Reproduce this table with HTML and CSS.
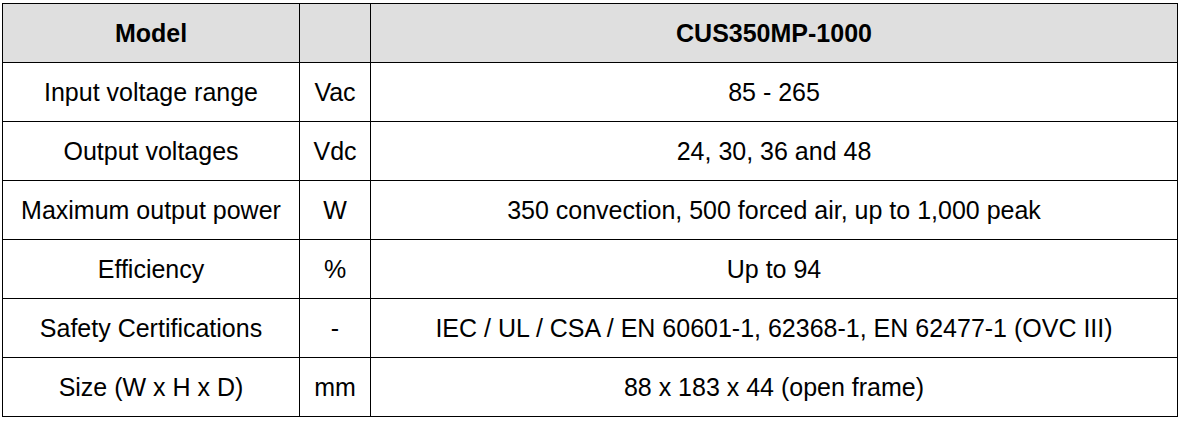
FILE: index.html
```html
<!DOCTYPE html>
<html>
<head>
<meta charset="utf-8">
<link rel="stylesheet" href="styles.css">
</head>
<body>
<table class="spec">
  <colgroup>
    <col class="c-label">
    <col class="c-unit">
    <col class="c-value">
  </colgroup>
  <thead>
    <tr class="head">
      <th>Model</th>
      <th></th>
      <th>CUS350MP-1000</th>
    </tr>
  </thead>
  <tbody>
    <tr><td>Input voltage range</td><td>Vac</td><td>85 - 265</td></tr>
    <tr><td>Output voltages</td><td>Vdc</td><td>24, 30, 36 and 48</td></tr>
    <tr><td>Maximum output power</td><td>W</td><td>350 convection, 500 forced air, up to 1,000 peak</td></tr>
    <tr><td>Efficiency</td><td>%</td><td>Up to 94</td></tr>
    <tr><td>Safety Certifications</td><td>-</td><td>IEC / UL / CSA / EN 60601-1, 62368-1, EN 62477-1 (OVC III)</td></tr>
    <tr><td>Size (W x H x D)</td><td>mm</td><td>88 x 183 x 44 (open frame)</td></tr>
  </tbody>
</table>
</body>
</html>
```

FILE: styles.css
```css
html, body {
  margin: 0;
  padding: 0;
  background: #ffffff;
}

body {
  padding: 3px 0 0 2px;
  font-family: "Liberation Sans", Arial, sans-serif;
  color: #000;
}

.spec {
  border-collapse: collapse;
  width: 1176px;
  table-layout: fixed;
}

.c-label { width: 297px; }
.c-unit { width: 71px; }
.c-value { width: auto; }

.spec th,
.spec td {
  border: 1px solid #000;
  height: 58px;
  padding: 0;
  text-align: center;
  vertical-align: middle;
  font-size: 25px;
  line-height: 1;
  white-space: nowrap;
}

.spec th {
  font-weight: bold;
  background: #dfdfdf;
}
```
